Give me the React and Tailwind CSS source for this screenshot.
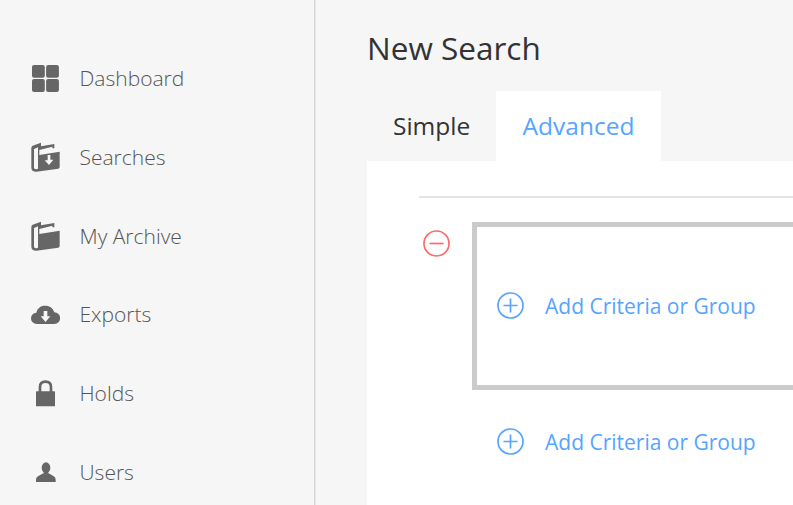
function Folder({ download }) {
  return (
    <svg viewBox="30 22 90 90" className="size-[30px]">
      <path fill="#666" fillRule="evenodd" d="M34 40Q34 35 38 33L63 24V35L103 28V41H97V36L58 46V61L119 51V97Q119 101 115 102L49 111Q34 111 34 99ZM42 43V99Q43 104 49 104L54 102V38Z" />
      {download && <path fill="#f6f6f6" d="M83 61H91V75H100L87 91 74 77H83Z" />}
    </svg>
  );
}

function Dashboard() {
  return (
    <svg viewBox="0 0 30 30" className="size-[30px]" fill="#666">
      <rect x="2" y="2" width="12.8" height="12.8" rx="2" />
      <rect x="16.1" y="2" width="12.8" height="12.8" rx="2" />
      <rect x="2" y="16.1" width="12.8" height="12.8" rx="2" />
      <rect x="16.1" y="16.1" width="12.8" height="12.8" rx="2" />
    </svg>
  );
}

function Cloud() {
  return (
    <svg viewBox="30 15 90 90" className="size-[30px]">
      <path fill="#666" d="M51 87A17 17 0 0 1 49 53C52 40 61 32 75 32C90 32 99 39 103 52A17.500 17.500 0 0 1 103 87Z" />
      <path fill="#f6f6f6" d="M71 48H82V64H91L76.500 81 62 64H71Z" />
    </svg>
  );
}

function Lock() {
  return (
    <svg viewBox="30 26 90 90" className="size-[30px]">
      <path fill="none" stroke="#666" strokeWidth="8" d="M60 69V53Q60 37 76.500 37T93 53V69" />
      <path fill="#666" d="M48 68Q48 66 50 66H103Q105 66 105 68V111H48Z" />
    </svg>
  );
}

function User() {
  return (
    <svg viewBox="30 22 90 90" className="size-[30px]" fill="#666">
      <ellipse cx="78" cy="54" rx="13" ry="16" />
      <path d="M70 71 78 76 86 71 101 80Q107 83 107 90V97H48V90Q48 83 54 80Z" />
      <path d="M71 65H85V73L78 77 71 73Z" />
    </svg>
  );
}

const items = [
  ['Dashboard', <Dashboard />],
  ['Searches', <Folder download />],
  ['My Archive', <Folder />],
  ['Exports', <Cloud />],
  ['Holds', <Lock />],
  ['Users', <User />],
];

function CircleIcon({ plus }) {
  return (
    <svg viewBox="0 0 27 27" className="size-[27px] shrink-0" fill="none" stroke="currentColor" strokeWidth="1.7">
      <circle cx="13.5" cy="13.5" r="12.5" />
      <path d={plus ? 'M6.500 13.500H20.500M13.500 6.500V20.500' : 'M6.500 13.500H20.500'} />
    </svg>
  );
}

function AddButton() {
  return (
    <button className="flex h-7 items-start gap-[21px] text-[21px] leading-7 text-[#55a5ff]">
      <CircleIcon plus />
      <span>Add Criteria or Group</span>
    </button>
  );
}

export default function App() {
  return (
    <div className="flex h-[505px] w-[793px] overflow-hidden bg-[#f6f6f6] font-['Open_Sans',sans-serif] text-[#333]">
      <nav className="flex w-[315px] shrink-0 flex-col border-r border-[#d9d9d9] pt-[39px] shadow-[1px_0_0_#e8e8e8]">
        {items.map(([label, icon]) => (
          <a key={label} className="flex h-[78.75px] shrink-0 items-center gap-[19.5px] pl-[30px] text-[21px] font-light text-[#555]">
            {icon}
            <span className="pt-px">{label}</span>
          </a>
        ))}
      </nav>
      <main className="ml-[52px] flex w-[426px] flex-col">
        <h1 className="mt-[26px] h-[65px] text-[31.5px] leading-[44px]">New Search</h1>
        <div className="flex h-[70px] shrink-0 text-[24.5px]">
          <div className="flex w-[129px] items-center pl-[26px]">Simple</div>
          <div className="flex w-[165px] items-center justify-center bg-white text-[#55a5ff]">Advanced</div>
        </div>
        <section className="flex-1 bg-white pl-[52px] pt-[35px]">
          <div className="border-t-2 border-[#e4e4e4] pt-6">
            <div className="flex">
              <div className="w-[53px] shrink-0 pl-1 pt-2 text-[#ff6b6b]"><CircleIcon /></div>
              <div className="flex-1">
                <div className="flex h-[168px] items-center border-[5px] border-r-0 border-[#cbcbcb] pl-5"><AddButton /></div>
                <div className="mt-[38px] pl-[25px]"><AddButton /></div>
              </div>
            </div>
          </div>
        </section>
      </main>
    </div>
  );
}
